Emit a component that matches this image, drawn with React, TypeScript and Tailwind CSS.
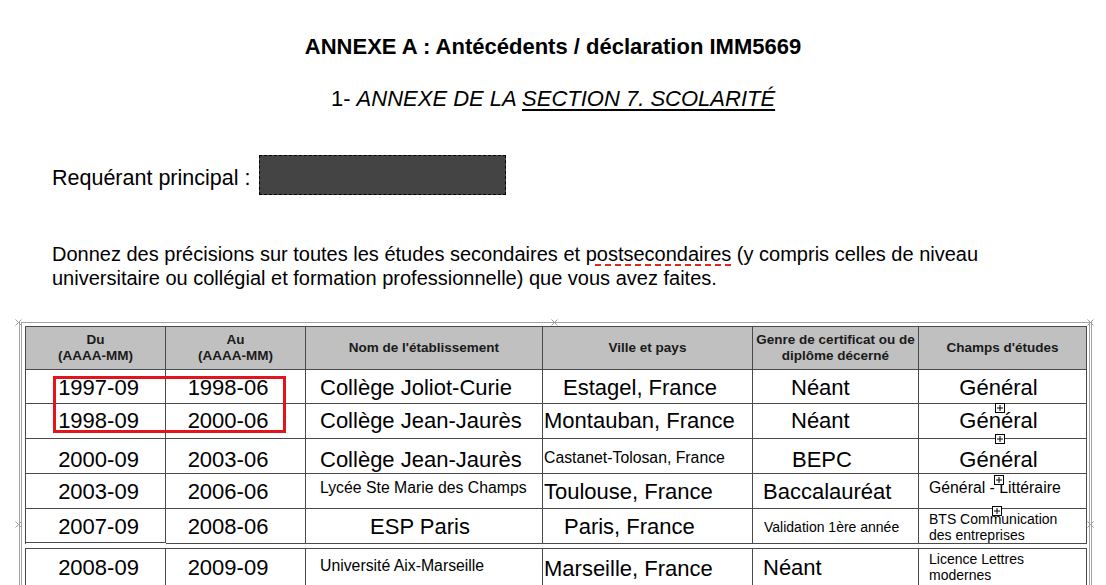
import React from 'react';

type CellProps = { children?: React.ReactNode; className?: string };

const Cell: React.FC<CellProps> = ({ children, className = '' }) => (
  <div className={`flex items-center border-r border-b border-[#4a4a4a] ${className}`}>{children}</div>
);

const HeadCell: React.FC<CellProps> = ({ children }) => (
  <div className="flex h-[43px] flex-col items-center justify-center border-r border-b border-[#4a4a4a] bg-[#c0c0c0] text-center text-[13.5px] font-bold leading-[16px] text-[#1a1a1a]">
    {children}
  </div>
);

const Handle: React.FC<{ className: string }> = ({ className }) => (
  <svg className={`absolute h-[10px] w-[10px] ${className}`} viewBox="0 0 10 10">
    <rect x="0.5" y="0.5" width="9" height="9" fill="white" stroke="black" />
    <line x1="5" y1="2" x2="5" y2="8" stroke="black" />
    <line x1="2" y1="5" x2="8" y2="5" stroke="black" />
  </svg>
);

const Cross: React.FC<{ className: string }> = ({ className }) => (
  <svg className={`absolute h-[7px] w-[7px] ${className}`} viewBox="0 0 7 7">
    <line x1="0.5" y1="0.5" x2="6.5" y2="6.5" stroke="#9a9a9a" />
    <line x1="6.5" y1="0.5" x2="0.5" y2="6.5" stroke="#9a9a9a" />
  </svg>
);

const cols = 'grid grid-cols-[140px_140px_237px_210px_166px_168px]';
const big = 'text-[22px] leading-[26px]';
const mid = 'text-[15.8px] leading-[18px]';
const small = 'text-[14px] leading-[16px]';

export default function App() {
  return (
    <div className="relative h-[585px] w-[1106px] overflow-hidden bg-white text-black font-['Liberation_Sans',Arial,sans-serif]">
      <h1 className="pt-[35px] text-center text-[22px] font-bold leading-[24px]">
        ANNEXE A : Antécédents / déclaration IMM5669
      </h1>
      <p className="mt-[28px] text-center text-[22px] leading-[24px]">
        1- <i>ANNEXE DE LA <u className="underline-offset-[3px]">SECTION 7. SCOLARITÉ</u></i>
      </p>

      <div className="mt-[44px] flex items-center pl-[52px]">
        <span className="pt-[5px] text-[21.5px] leading-[24px]">Requérant principal :</span>
        <div className="ml-[9px] h-[40px] w-[247px] border border-dashed border-black bg-[#444444]" />
      </div>

      <p className="mt-[47px] whitespace-nowrap pl-[52px] text-[20px] leading-[24px]">
        Donnez des précisions sur toutes les études secondaires et{' '}
        <span className="underline decoration-[#e3261f] decoration-dashed decoration-2 underline-offset-[3px]">postsecondaires</span>{' '}
        (y compris celles de niveau
        <br />
        universitaire ou collégial et formation professionnelle) que vous avez faites.
      </p>

      {/* table frame */}
      <div className="ml-[19px] mt-[32px] w-[1073px] border-x-[3px] border-t border-double border-x-[#a3a3a3] border-t-[#a3a3a3] pb-[40px] pl-[3px] pr-[2px] pt-[3px]">
        <div className={`${cols} border-l border-t border-[#4a4a4a]`}>
          <HeadCell>
            <span>Du</span>
            <span>(AAAA-MM)</span>
          </HeadCell>
          <HeadCell>
            <span>Au</span>
            <span>(AAAA-MM)</span>
          </HeadCell>
          <HeadCell>Nom de l'établissement</HeadCell>
          <HeadCell>Ville et pays</HeadCell>
          <HeadCell>
            <span>Genre de certificat ou de</span>
            <span>diplôme décerné</span>
          </HeadCell>
          <HeadCell>Champs d'études</HeadCell>

          {/* row 1 */}
          <Cell className={`h-[34px] justify-center pl-[6px] pt-[3px] ${big}`}>1997-09</Cell>
          <Cell className={`justify-center pr-[15px] pt-[3px] ${big}`}>1998-06</Cell>
          <Cell className={`pl-[14px] pt-[3px] ${big}`}>Collège Joliot-Curie</Cell>
          <Cell className={`pl-[20px] pt-[3px] ${big}`}>Estagel, France</Cell>
          <Cell className={`pl-[38px] pt-[3px] ${big}`}>Néant</Cell>
          <Cell className={`justify-center pr-[8px] pt-[3px] ${big}`}>Général</Cell>

          {/* row 2 */}
          <Cell className={`h-[35px] justify-center pl-[6px] ${big}`}>1998-09</Cell>
          <Cell className={`justify-center pr-[15px] ${big}`}>2000-06</Cell>
          <Cell className={`pl-[14px] ${big}`}>Collège Jean-Jaurès</Cell>
          <Cell className={`pl-[1px] ${big}`}>Montauban, France</Cell>
          <Cell className={`pl-[38px] ${big}`}>Néant</Cell>
          <Cell className={`justify-center pr-[8px] ${big}`}>Général</Cell>

          {/* row 3 */}
          <Cell className={`h-[35px] justify-center pl-[6px] pt-[8px] ${big}`}>2000-09</Cell>
          <Cell className={`justify-center pr-[15px] pt-[8px] ${big}`}>2003-06</Cell>
          <Cell className={`pl-[14px] pt-[8px] ${big}`}>Collège Jean-Jaurès</Cell>
          <Cell className={`pl-[1px] pt-[4px] ${mid}`}>Castanet-Tolosan, France</Cell>
          <Cell className={`pl-[39px] pt-[8px] ${big}`}>BEPC</Cell>
          <Cell className={`justify-center pr-[8px] pt-[8px] ${big}`}>Général</Cell>

          {/* row 4 */}
          <Cell className={`h-[35px] justify-center pl-[6px] pt-[1px] ${big}`}>2003-09</Cell>
          <Cell className={`justify-center pr-[15px] pt-[1px] ${big}`}>2006-06</Cell>
          <Cell className={`items-start pl-[14px] pt-[5px] ${mid}`}>Lycée Ste Marie des Champs</Cell>
          <Cell className={`pl-[1px] pt-[1px] ${big}`}>Toulouse, France</Cell>
          <Cell className={`pl-[10px] pt-[1px] ${big}`}>Baccalauréat</Cell>
          <Cell className={`items-start pl-[10px] pt-[5px] ${mid}`}>Général - Littéraire</Cell>

          {/* row 5 */}
          <Cell className={`h-[34px] justify-center pl-[6px] pt-[2px] ${big}`}>2007-09</Cell>
          <Cell className={`justify-center pr-[15px] pt-[2px] ${big}`}>2008-06</Cell>
          <Cell className={`justify-center pr-[8px] pt-[2px] ${big}`}>ESP Paris</Cell>
          <Cell className={`pl-[21px] pt-[2px] ${big}`}>Paris, France</Cell>
          <Cell className={`pl-[11px] pt-[2px] ${small}`}>Validation 1ère année</Cell>
          <Cell className={`flex-col items-start justify-center pl-[10px] pt-[2px] ${small}`}>
            <span>BTS Communication</span>
            <span>des entreprises</span>
          </Cell>
        </div>

        <div className={`${cols} mt-[4px] border-l border-t border-[#4a4a4a]`}>
          <Cell className={`h-[37px] justify-center pl-[6px] pt-[2px] ${big}`}>2008-09</Cell>
          <Cell className={`justify-center pr-[15px] pt-[2px] ${big}`}>2009-09</Cell>
          <Cell className={`items-start pl-[14px] pt-[8px] ${mid}`}>Université Aix-Marseille</Cell>
          <Cell className={`pl-[1px] pt-[4px] ${big}`}>Marseille, France</Cell>
          <Cell className={`pl-[10px] pt-[2px] ${big}`}>Néant</Cell>
          <Cell className={`flex-col items-start justify-center pl-[10px] ${small}`}>
            <span>Licence Lettres</span>
            <span>modernes</span>
          </Cell>
        </div>
      </div>

      {/* overlays */}
      <div className="absolute left-[53px] top-[376px] h-[57px] w-[233px] border-[3px] border-[#e3141c]" />
      <Handle className="left-[995px] top-[403px]" />
      <Handle className="left-[995px] top-[434px]" />
      <Handle className="left-[994px] top-[475px]" />
      <Handle className="left-[992px] top-[506px]" />
      <Cross className="left-[15px] top-[319px]" />
      <Cross className="left-[551px] top-[319px]" />
      <Cross className="left-[1087px] top-[319px]" />
      <Cross className="left-[15px] top-[521px]" />
      <Cross className="left-[1087px] top-[521px]" />
    </div>
  );
}
